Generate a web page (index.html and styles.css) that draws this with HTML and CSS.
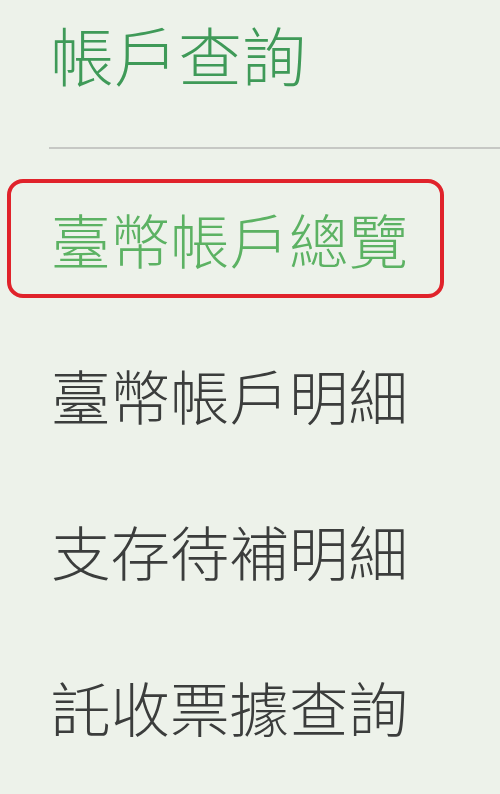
FILE: index.html
```html
<!DOCTYPE html>
<html lang="zh-Hant">
<head>
<meta charset="utf-8">
<link rel="stylesheet" href="styles.css">
</head>
<body>
<div class="panel">
  <h1 class="title">帳戶查詢</h1>
  <div class="divider"></div>
  <ul class="menu">
    <li class="item active">臺幣帳戶總覽</li>
    <li class="item">臺幣帳戶明細</li>
    <li class="item">支存待補明細</li>
    <li class="item">託收票據查詢</li>
  </ul>
</div>
</body>
</html>
```

FILE: styles.css
```css
html, body {
  margin: 0;
  padding: 0;
  background: #edf2ea;
}
body {
  width: 500px;
  height: 794px;
  overflow: hidden;
  font-family: "Noto Sans CJK TC", "Noto Sans CJK SC", sans-serif;
  font-weight: 300;
}
.panel {
  display: flex;
  flex-direction: column;
}
.title {
  margin: 21px 0 0 0;
  padding-left: 50px;
  font-size: 64px;
  line-height: 64px;
  font-weight: 300;
  color: #3f9a58;
}
.divider {
  margin: 62px 0 0 49px;
  height: 2px;
  background: #c6c8c4;
}
.menu {
  list-style: none;
  margin: 30px 0 0 0;
  padding: 0;
  display: flex;
  flex-direction: column;
  gap: 37px;
}
.item {
  box-sizing: border-box;
  height: 119px;
  width: 437px;
  margin-left: 7px;
  padding-left: 40px;
  padding-bottom: 2px;
  display: flex;
  align-items: center;
  font-size: 59.5px;
  color: #3b3d3c;
  border: 4px solid transparent;
  border-radius: 16px;
}
.item.active {
  color: #5cb263;
  border-color: #e0232b;
}
```
